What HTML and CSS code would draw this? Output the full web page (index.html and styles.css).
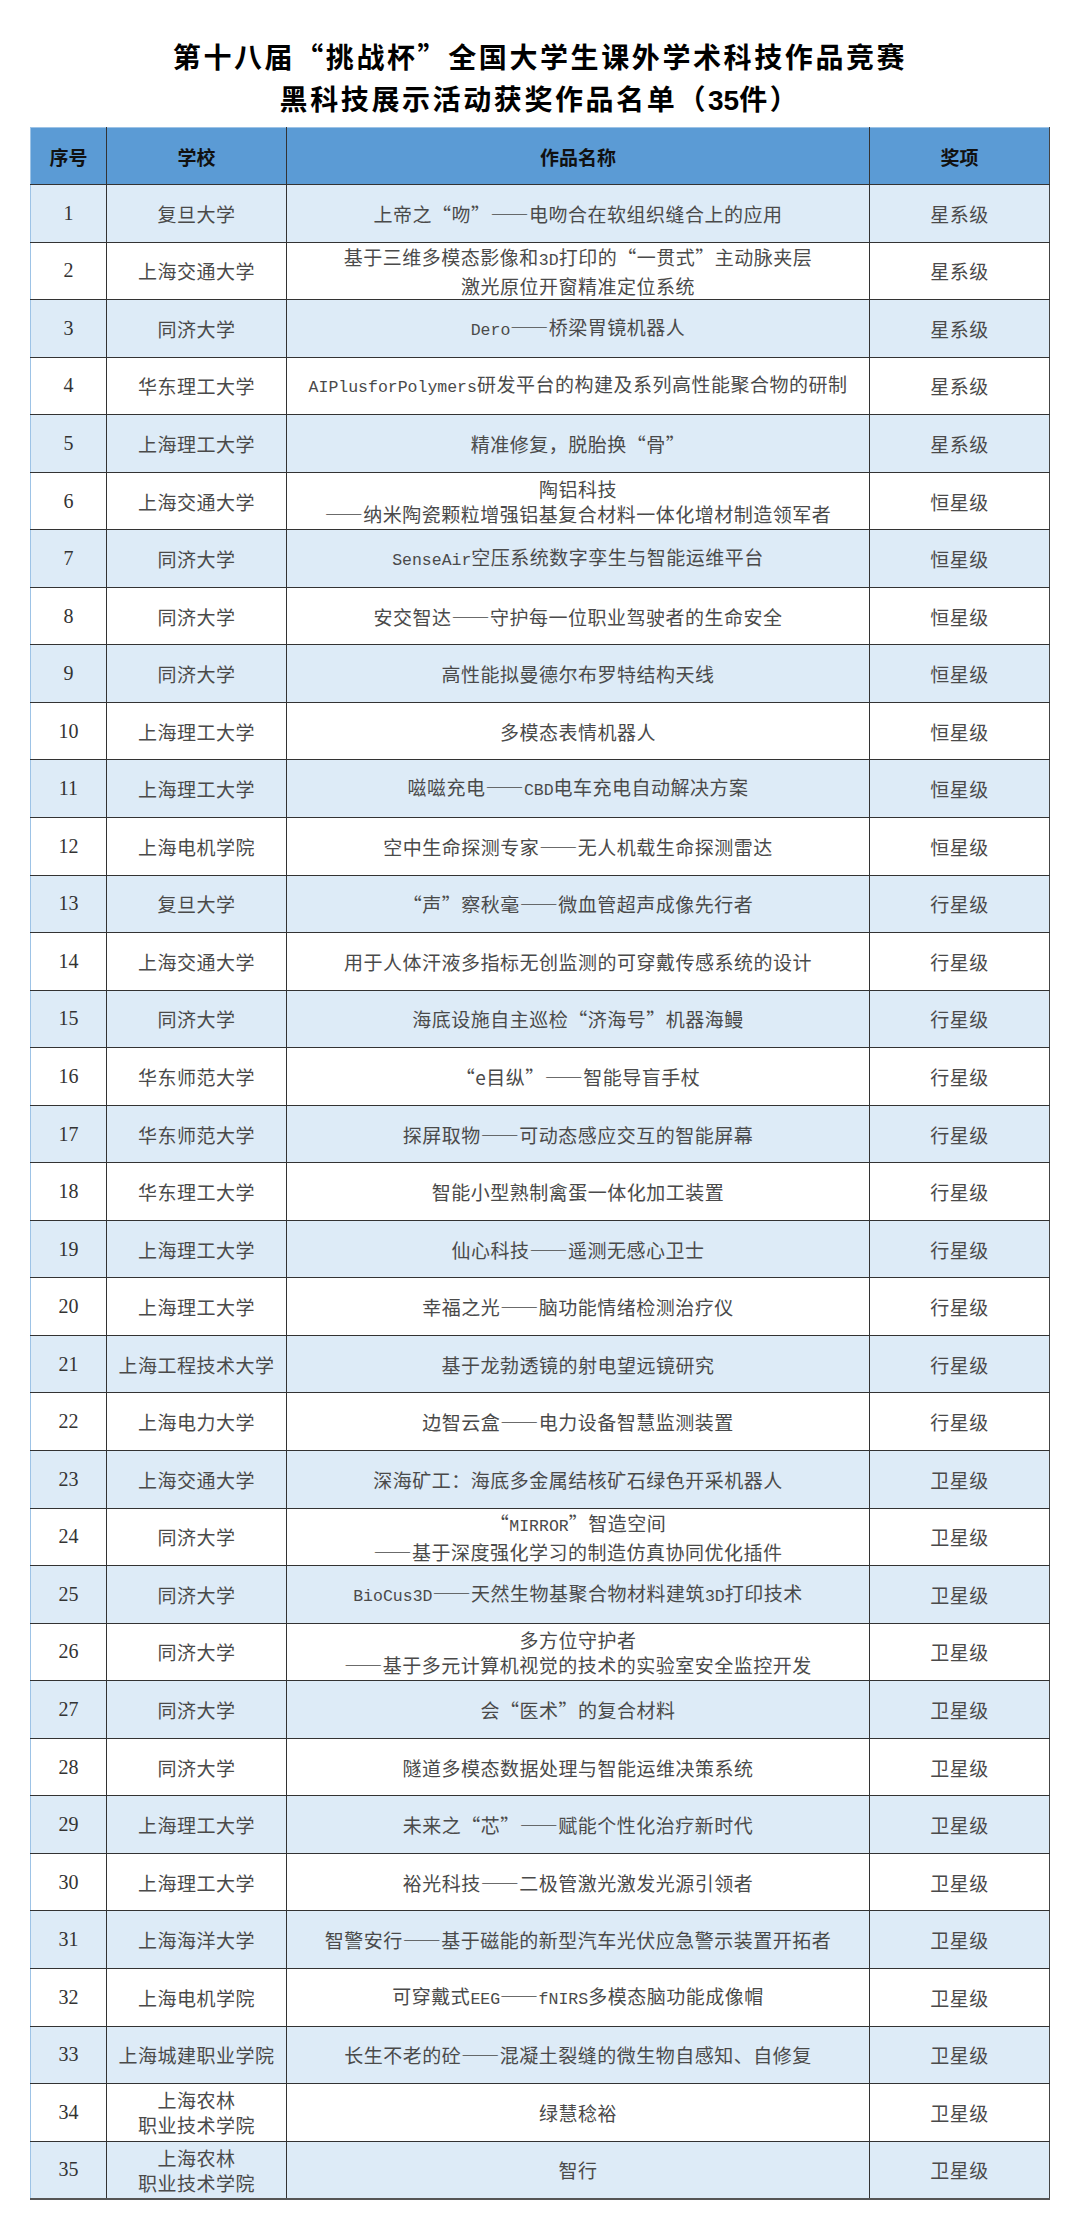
FILE: index.html
```html
<!DOCTYPE html>
<html lang="zh-CN">
<head>
<meta charset="utf-8">
<title>黑科技展示活动获奖作品名单</title>
<link rel="stylesheet" href="styles.css">
</head>
<body>
<div class="page">
  <h1 class="title">
    <span class="title-line">第十八届“挑战杯”全国大学生课外学术科技作品竞赛</span>
    <span class="title-line">黑科技展示活动获奖作品名单（<span class="title-num">35</span>件）</span>
  </h1>
  <table class="awards">
    <colgroup>
      <col class="c-no"><col class="c-school"><col class="c-work"><col class="c-level">
    </colgroup>
    <thead>
      <tr><th>序号</th><th>学校</th><th>作品名称</th><th>奖项</th></tr>
    </thead>
    <tbody>
      <tr><td class="no">1</td><td>复旦大学</td><td>上帝之“吻”——电吻合在软组织缝合上的应用</td><td>星系级</td></tr>
      <tr><td class="no">2</td><td>上海交通大学</td><td>基于三维多模态影像和<span class="en">3D</span>打印的“一贯式”主动脉夹层<br>激光原位开窗精准定位系统</td><td>星系级</td></tr>
      <tr><td class="no">3</td><td>同济大学</td><td><span class="en">Dero</span>——桥梁胃镜机器人</td><td>星系级</td></tr>
      <tr><td class="no">4</td><td>华东理工大学</td><td><span class="en">AIPlusforPolymers</span>研发平台的构建及系列高性能聚合物的研制</td><td>星系级</td></tr>
      <tr><td class="no">5</td><td>上海理工大学</td><td>精准修复，脱胎换“骨”</td><td>星系级</td></tr>
      <tr><td class="no">6</td><td>上海交通大学</td><td>陶铝科技<br>——纳米陶瓷颗粒增强铝基复合材料一体化增材制造领军者</td><td>恒星级</td></tr>
      <tr><td class="no">7</td><td>同济大学</td><td><span class="en">SenseAir</span>空压系统数字孪生与智能运维平台</td><td>恒星级</td></tr>
      <tr><td class="no">8</td><td>同济大学</td><td>安交智达——守护每一位职业驾驶者的生命安全</td><td>恒星级</td></tr>
      <tr><td class="no">9</td><td>同济大学</td><td>高性能拟曼德尔布罗特结构天线</td><td>恒星级</td></tr>
      <tr><td class="no">10</td><td>上海理工大学</td><td>多模态表情机器人</td><td>恒星级</td></tr>
      <tr><td class="no">11</td><td>上海理工大学</td><td>嗞嗞充电——<span class="en">CBD</span>电车充电自动解决方案</td><td>恒星级</td></tr>
      <tr><td class="no">12</td><td>上海电机学院</td><td>空中生命探测专家——无人机载生命探测雷达</td><td>恒星级</td></tr>
      <tr><td class="no">13</td><td>复旦大学</td><td>“声”察秋毫——微血管超声成像先行者</td><td>行星级</td></tr>
      <tr><td class="no">14</td><td>上海交通大学</td><td>用于人体汗液多指标无创监测的可穿戴传感系统的设计</td><td>行星级</td></tr>
      <tr><td class="no">15</td><td>同济大学</td><td>海底设施自主巡检“济海号”机器海鳗</td><td>行星级</td></tr>
      <tr><td class="no">16</td><td>华东师范大学</td><td>“e目纵”——智能导盲手杖</td><td>行星级</td></tr>
      <tr><td class="no">17</td><td>华东师范大学</td><td>探屏取物——可动态感应交互的智能屏幕</td><td>行星级</td></tr>
      <tr><td class="no">18</td><td>华东理工大学</td><td>智能小型熟制禽蛋一体化加工装置</td><td>行星级</td></tr>
      <tr><td class="no">19</td><td>上海理工大学</td><td>仙心科技——遥测无感心卫士</td><td>行星级</td></tr>
      <tr><td class="no">20</td><td>上海理工大学</td><td>幸福之光——脑功能情绪检测治疗仪</td><td>行星级</td></tr>
      <tr><td class="no">21</td><td>上海工程技术大学</td><td>基于龙勃透镜的射电望远镜研究</td><td>行星级</td></tr>
      <tr><td class="no">22</td><td>上海电力大学</td><td>边智云盒——电力设备智慧监测装置</td><td>行星级</td></tr>
      <tr><td class="no">23</td><td>上海交通大学</td><td>深海矿工：海底多金属结核矿石绿色开采机器人</td><td>卫星级</td></tr>
      <tr><td class="no">24</td><td>同济大学</td><td>“<span class="en">MIRROR</span>”智造空间<br>——基于深度强化学习的制造仿真协同优化插件</td><td>卫星级</td></tr>
      <tr><td class="no">25</td><td>同济大学</td><td><span class="en">BioCus3D</span>——天然生物基聚合物材料建筑<span class="en">3D</span>打印技术</td><td>卫星级</td></tr>
      <tr><td class="no">26</td><td>同济大学</td><td>多方位守护者<br>——基于多元计算机视觉的技术的实验室安全监控开发</td><td>卫星级</td></tr>
      <tr><td class="no">27</td><td>同济大学</td><td>会“医术”的复合材料</td><td>卫星级</td></tr>
      <tr><td class="no">28</td><td>同济大学</td><td>隧道多模态数据处理与智能运维决策系统</td><td>卫星级</td></tr>
      <tr><td class="no">29</td><td>上海理工大学</td><td>未来之“芯”——赋能个性化治疗新时代</td><td>卫星级</td></tr>
      <tr><td class="no">30</td><td>上海理工大学</td><td>裕光科技——二极管激光激发光源引领者</td><td>卫星级</td></tr>
      <tr><td class="no">31</td><td>上海海洋大学</td><td>智警安行——基于磁能的新型汽车光伏应急警示装置开拓者</td><td>卫星级</td></tr>
      <tr><td class="no">32</td><td>上海电机学院</td><td>可穿戴式<span class="en">EEG</span>——<span class="en">fNIRS</span>多模态脑功能成像帽</td><td>卫星级</td></tr>
      <tr><td class="no">33</td><td>上海城建职业学院</td><td>长生不老的砼——混凝土裂缝的微生物自感知、自修复</td><td>卫星级</td></tr>
      <tr><td class="no">34</td><td>上海农林<br>职业技术学院</td><td>绿慧稔裕</td><td>卫星级</td></tr>
      <tr><td class="no">35</td><td>上海农林<br>职业技术学院</td><td>智行</td><td>卫星级</td></tr>
    </tbody>
  </table>
</div>
</body>
</html>
```

FILE: styles.css
```css
html, body {
  margin: 0;
  padding: 0;
  background: #ffffff;
}

body {
  font-family: "Noto Sans CJK SC", "Liberation Sans", sans-serif;
  color: #4a4a4a;
}

.page {
  width: 1080px;
  padding-top: 35px;
}

.title {
  margin: 0 0 5px 0;
  text-align: center;
  font-family: "Noto Sans CJK SC", sans-serif;
  font-weight: 700;
  font-size: 28px;
  line-height: 42px;
  letter-spacing: 2.6px;
  color: #000000;
}

.title-line {
  display: block;
}

.title-num {
  font-family: "Liberation Sans", sans-serif;
  letter-spacing: 0;
}

.awards {
  margin-left: 30px;
  width: 1019px;
  border-collapse: collapse;
  table-layout: fixed;
  border-left: 1px solid #9dc3e6;
  border-right: 1px solid #444444;
  border-bottom: 2px solid #555555;
}

.c-no { width: 76px; }
.c-school { width: 180px; }
.c-work { width: 583px; }
.c-level { width: 180px; }

.awards th,
.awards td {
  padding: 0;
  text-align: center;
  vertical-align: middle;
  border-right: 1px solid #333333;
  border-bottom: 1px solid #333333;
}

.awards th:first-child,
.awards td:first-child {
  border-left: 1px solid #9dc3e6;
}

.awards th:last-child,
.awards td:last-child {
  border-right: 1px solid #444444;
}

.awards thead tr {
  height: 57px;
  background: #5b9bd5;
}

.awards th {
  font-weight: 700;
  font-size: 19px;
  color: #111111;
  border-top: 1px solid #9dc3e6;
}

.awards tbody tr {
  height: 57.55px;
}

.awards tbody tr:nth-child(odd) {
  background: #ddebf7;
}

.awards tbody tr:nth-child(even) {
  background: #ffffff;
}

.awards td {
  font-size: 19px;
  line-height: 25px;
  letter-spacing: 0.5px;
  color: #4a4a4a;
}

.awards td.no {
  font-family: "Liberation Serif", serif;
  font-size: 20px;
  letter-spacing: 0;
  color: #333333;
}

.en {
  font-family: "Liberation Mono", monospace;
  font-size: 16.5px;
  letter-spacing: 0;
}
```
